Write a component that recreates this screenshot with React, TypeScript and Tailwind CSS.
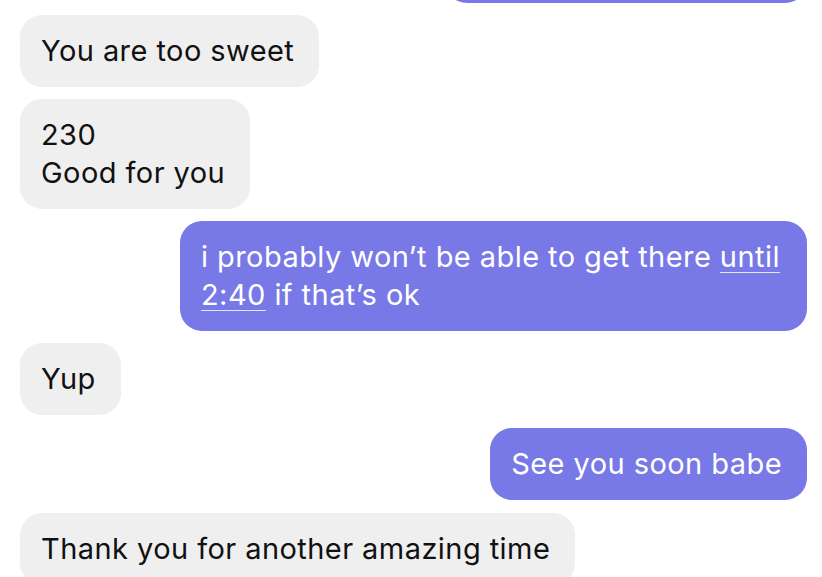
const gray = "rounded-[22px] bg-[#efefef] pl-[21px] pr-[25px] py-[17px] text-[#111111]";
const purple = "rounded-[22px] bg-[#7879e6] pl-[21px] pr-[25px] py-[17px] text-white";

export default function App() {
  return (
    <div
      className="h-[577px] w-[822px] overflow-hidden bg-white"
      style={{ fontFamily: "Inter, 'Liberation Sans', sans-serif" }}
    >
      <div className="flex flex-col gap-3 pl-5 pr-[15px] text-[29px] leading-[38px] tracking-[0.015em]">
        <div className="-mt-[69px] self-end">
          <div className={`${purple} h-[72px] w-[362px]`} />
        </div>

        <div className="self-start">
          <div className={gray}>You are too sweet</div>
        </div>

        <div className="self-start">
          <div className={gray}>
            230
            <br />
            Good for you
          </div>
        </div>

        <div className="self-end">
          <div className={`${purple} w-[627px]`}>
            i probably won’t be able to get there{" "}
            <span className="underline decoration-white/80 decoration-1 underline-offset-[5px]">until 2:40</span>{" "}
            if that’s ok
          </div>
        </div>

        <div className="self-start">
          <div className={gray}>Yup</div>
        </div>

        <div className="self-end pt-px">
          <div className={purple}>See you soon babe</div>
        </div>

        <div className="self-start pt-px">
          <div className={gray}>Thank you for another amazing time</div>
        </div>
      </div>
    </div>
  );
}
